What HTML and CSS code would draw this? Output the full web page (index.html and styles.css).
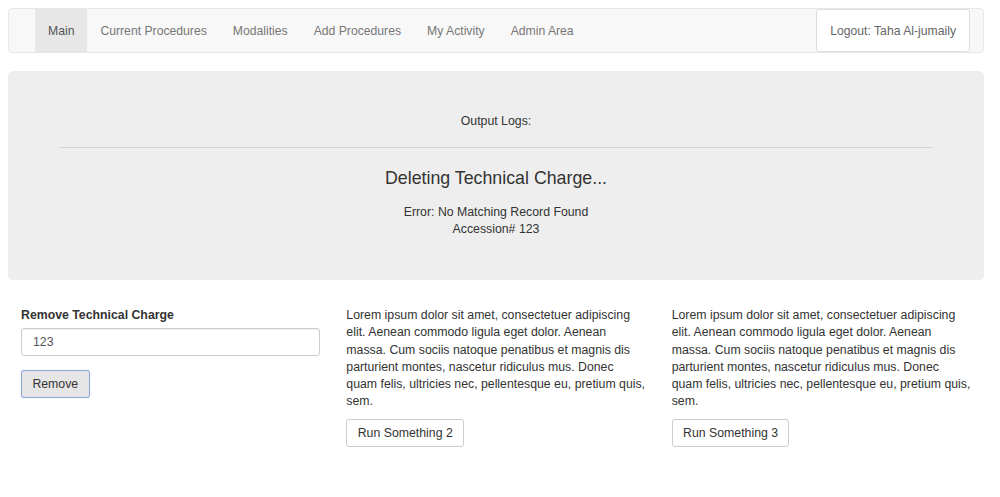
FILE: index.html
```html
<!DOCTYPE html>
<html lang="en">
<head>
<meta charset="utf-8">
<title>Main</title>
<link rel="stylesheet" href="styles.css">
</head>
<body>
<nav class="navbar">
  <ul class="nav">
    <li><a class="nav-link active" href="#">Main</a></li>
    <li><a class="nav-link" href="#">Current Procedures</a></li>
    <li><a class="nav-link" href="#">Modalities</a></li>
    <li><a class="nav-link" href="#">Add Procedures</a></li>
    <li><a class="nav-link" href="#">My Activity</a></li>
    <li><a class="nav-link" href="#">Admin Area</a></li>
  </ul>
  <a class="logout" href="#">Logout: Taha Al-jumaily</a>
</nav>

<div class="jumbotron">
  <p class="log-title">Output Logs:</p>
  <hr class="divider">
  <h3 class="log-heading">Deleting Technical Charge...</h3>
  <div class="log-lines">
    <div>Error: No Matching Record Found</div>
    <div>Accession# 123</div>
  </div>
</div>

<div class="row">
  <div class="col">
    <form class="form">
      <label class="label" for="acc">Remove Technical Charge</label>
      <input class="input" id="acc" type="text" value="123">
      <button class="btn btn-focus" type="button">Remove</button>
    </form>
  </div>
  <div class="col">
    <p class="text">Lorem ipsum dolor sit amet, consectetuer adipiscing elit. Aenean commodo ligula eget dolor. Aenean massa. Cum sociis natoque penatibus et magnis dis parturient montes, nascetur ridiculus mus. Donec quam felis, ultricies nec, pellentesque eu, pretium quis, sem.</p>
    <button class="btn" type="button">Run Something 2</button>
  </div>
  <div class="col">
    <p class="text">Lorem ipsum dolor sit amet, consectetuer adipiscing elit. Aenean commodo ligula eget dolor. Aenean massa. Cum sociis natoque penatibus et magnis dis parturient montes, nascetur ridiculus mus. Donec quam felis, ultricies nec, pellentesque eu, pretium quis, sem.</p>
    <button class="btn" type="button">Run Something 3</button>
  </div>
</div>
</body>
</html>
```

FILE: styles.css
```css
* { box-sizing: border-box; }

html, body { background: #fff; }

body {
  margin: 8px 16px 8px 8px;
  font-family: "Liberation Sans", Arial, Helvetica, sans-serif;
  font-size: 12.3px;
  line-height: 17.2px;
  color: #333;
}

.navbar {
  display: flex;
  justify-content: space-between;
  align-items: stretch;
  height: 45px;
  padding: 0 13px 0 26px;
  background: #f8f8f8;
  border: 1px solid #e7e7e7;
  border-radius: 4px;
  font-size: 12.2px;
}

.nav {
  display: flex;
  list-style: none;
  margin: 0;
  padding: 0;
}

.nav-link {
  display: block;
  padding: 14px 13px 12px;
  line-height: 17px;
  color: #777;
  text-decoration: none;
}

.nav-link.active {
  background: #e7e7e7;
  color: #555;
}

.logout {
  display: block;
  padding: 13px 13px 11px;
  line-height: 17px;
  color: #666;
  text-decoration: none;
  background: #fff;
  border: 1px solid #dedede;
  border-radius: 3px;
}

.jumbotron {
  margin-top: 18px;
  margin-bottom: 27px;
  padding: 41.5px 51px 42px;
  background: #eee;
  border-radius: 5px;
  text-align: center;
}

.log-title { margin: 0; }

.divider {
  margin: 17px 0 0;
  border: 0;
  border-top: 1px solid #d5d5d5;
  height: 0;
}

.log-heading {
  margin: 20px 0 0;
  font-size: 17.8px;
  line-height: 20px;
  font-weight: normal;
  color: #333;
}

.log-lines { margin-top: 16px; }

.row {
  display: grid;
  grid-template-columns: repeat(3, 1fr);
}

.col { padding: 0 13px; }

.form { margin: 0; }

.label {
  display: block;
  margin-bottom: 3.5px;
  font-weight: bold;
}

.input {
  display: block;
  width: 100%;
  height: 28px;
  margin: 0 0 14px;
  padding: 0 11px;
  font: inherit;
  color: #555;
  background: #fff;
  border: 1px solid #ccc;
  border-radius: 3px;
  box-shadow: inset 0 1px 1px rgba(0,0,0,.06);
}

.text { margin: 0 0 8.7px; }

.btn {
  display: inline-block;
  height: 28px;
  padding: 0 10.4px;
  font: inherit;
  line-height: 26px;
  color: #333;
  background: #fff;
  border: 1px solid #ccc;
  border-radius: 3px;
  cursor: pointer;
}

.btn-focus {
  background: #e6e6e6;
  border-color: #8aaad6;
  box-shadow: 0 0 1px rgba(100,140,210,.5);
}
```
